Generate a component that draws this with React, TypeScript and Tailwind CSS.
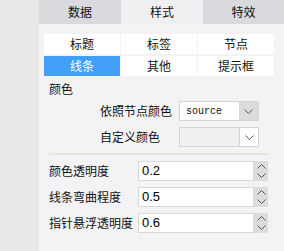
import React from 'react';

const subTabs = ['标题', '标签', '节点', '线条', '其他', '提示框'];

const numberRows = [
  { label: '颜色透明度', value: '0.2' },
  { label: '线条弯曲程度', value: '0.5' },
  { label: '指针悬浮透明度', value: '0.6' },
];

const Chevron = ({ up = false }: { up?: boolean }) => (
  <svg width="9" height="5" viewBox="0 0 9 5" className={up ? 'rotate-180' : ''}>
    <path d="M0.5 0.5 L4.5 4.5 L8.5 0.5" fill="none" stroke="#555" strokeWidth="1" />
  </svg>
);

const App: React.FC = () => {
  return (
    <div className="flex w-[284px] h-[251px] font-['Noto_Sans_CJK_SC',sans-serif] text-[12px] text-[#111] overflow-hidden">
      <div className="w-[39px] bg-[#e8e8e8]" />
      <div className="flex-1 flex flex-col bg-[#f3f3f5]">
        <div className="grid grid-cols-[82px_82px_81px] h-[24px]">
          <div className="flex items-center justify-center bg-[#d9dade]">数据</div>
          <div className="flex items-center justify-center bg-[#f0f0f2]">样式</div>
          <div className="flex items-center justify-center bg-[#d9dade]">特效</div>
        </div>

        <div className="mt-[10px] ml-[5px] w-[230px] grid grid-cols-3 gap-x-px gap-y-[2px]">
          {subTabs.map(t => (
            <div
              key={t}
              className={
                t === '线条'
                  ? 'h-[20px] flex items-center justify-center bg-[#42a0f9] text-white'
                  : 'h-[20px] flex items-center justify-center bg-white'
              }
            >
              {t}
            </div>
          ))}
        </div>

        <div className="mt-[5px] ml-[10px] h-[16px] leading-[16px]">颜色</div>

        <div className="mt-[4px] flex items-center h-[20px]">
          <div className="w-[140px] pl-[61px]">依照节点颜色</div>
          <div className="flex w-[80px] h-[20px] border border-[#d4d4d4] bg-white">
            <div className="flex-1 flex items-center pl-[6px] font-['Liberation_Mono',monospace] text-[10px]">source</div>
            <div className="w-[19px] flex items-center justify-center bg-[#dcdcdc]">
              <Chevron />
            </div>
          </div>
        </div>

        <div className="mt-[6px] flex items-center h-[20px]">
          <div className="w-[140px] pl-[61px]">自定义颜色</div>
          <div className="flex w-[80px] h-[20px] border border-[#d4d4d4] bg-[#f0f0f0]">
            <div className="flex-1" />
            <div className="w-[19px] flex items-center justify-center bg-white border-l border-[#d4d4d4]">
              <Chevron />
            </div>
          </div>
        </div>

        <div className="mt-[6px] ml-[10px] mr-[16px] h-[2px] bg-[#e8e6d6]" />

        <div className="mt-[6px] flex flex-col gap-[6px]">
          {numberRows.map(r => (
            <div key={r.label} className="flex items-center h-[20px]">
              <div className="w-[99px] pl-[10px]">{r.label}</div>
              <div className="flex w-[130px] h-[20px]">
                <div className="flex-1 flex items-center pl-[3px] bg-white border border-[#d8d8d8] font-['Liberation_Sans',sans-serif] text-[13px] text-[#000]">
                  {r.value}
                </div>
                <div className="w-[14px] flex flex-col items-center justify-center gap-[4px] bg-[#dcdcdc]">
                  <Chevron up />
                  <Chevron />
                </div>
              </div>
            </div>
          ))}
        </div>
      </div>
    </div>
  );
};

export default App;
